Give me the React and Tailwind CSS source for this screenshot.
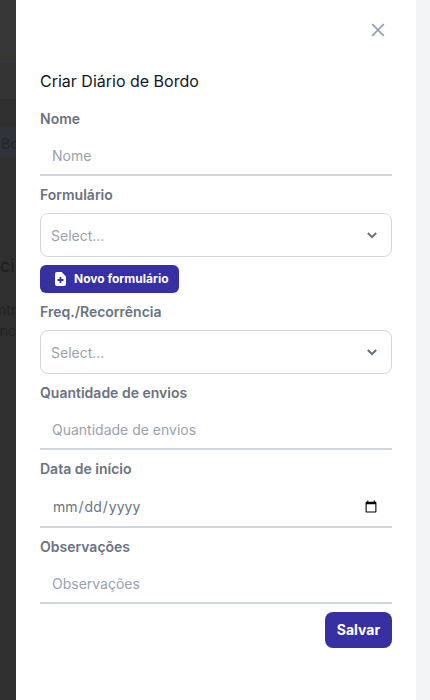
const fontStack = { fontFamily: 'Inter, "Noto Sans", sans-serif' };

function FieldLabel({ children, className = '' }) {
  return <label className={`block text-sm leading-5 font-semibold text-gray-500 ${className}`}>{children}</label>;
}

function LineInput({ placeholder, type = 'text' }) {
  return (
    <input
      type={type}
      placeholder={placeholder}
      className="block h-10 w-full border-0 border-b-2 border-gray-300 bg-white px-3 text-sm text-gray-500 placeholder:text-gray-400 outline-none"
    />
  );
}

function SelectBox() {
  return (
    <div className="flex h-11 w-full items-center justify-between rounded-lg border border-gray-300 bg-white pl-2.5 pr-[12px]">
      <span className="pt-0.5 text-sm text-gray-400">Select...</span>
      <svg width="14" height="14" viewBox="0 0 14 14" fill="none" stroke="#6b7280" strokeWidth="2">
        <path d="M2.8 5 7 9l4.2-4" />
      </svg>
    </div>
  );
}

function BackgroundStrip() {
  return (
    <div className="h-full w-4 shrink-0 overflow-hidden bg-[#303030]">
      <div className="h-16 border-b border-[#2c3242] bg-[#373737]" />
      <div className="h-[36px] border-b border-[#303030] bg-[#343434]" />
      <div className="mt-[27px] flex h-[30px] w-4 items-center bg-[#30333a] pt-1 pl-px text-sm whitespace-nowrap text-[#23262c]">Bo</div>
      <div className="mt-[95px] h-7 w-4 text-lg leading-7 whitespace-nowrap text-[#1f1f1f]">ci</div>
      <div className="mt-[19px] flex w-4 justify-end text-sm leading-[21px] whitespace-nowrap text-[#222222]">ntr</div>
      <div className="flex w-4 justify-end text-sm leading-[21px] whitespace-nowrap text-[#222222]">ênc</div>
    </div>
  );
}

export default function App() {
  return (
    <div className="flex h-[700px] w-[430px] overflow-hidden bg-[#f3f4f6]" style={fontStack}>
      <BackgroundStrip />
      <div className="h-full w-[400px] shrink-0 bg-white px-6 pt-[21px]">
        <div className="flex justify-end pr-[5px]">
          <button type="button" className="text-gray-400">
            <svg width="18" height="18" viewBox="0 0 18 18" fill="none" stroke="currentColor" strokeWidth="1.8">
              <path d="M3.2 3.2 14.8 14.8M14.8 3.2 3.2 14.8" />
            </svg>
          </button>
        </div>
        <h2 className="mt-[30px] text-base leading-6 text-gray-900">Criar Diário de Bordo</h2>
        <form className="mt-[16px]">
          <FieldLabel>Nome</FieldLabel>
          <div className="mt-[7px]">
            <LineInput placeholder="Nome" />
          </div>
          <FieldLabel className="mt-[9px]">Formulário</FieldLabel>
          <div className="mt-2">
            <SelectBox />
          </div>
          <button type="button" className="mt-2 flex h-7 w-[139px] items-center gap-2 rounded-md bg-[#3730a3] pl-[15px] text-xs font-bold text-white">
            <svg width="11" height="14" viewBox="0 0 11 14" fill="white">
              <path d="M2 0h4.6L11 4.4V12a2 2 0 0 1-2 2H2a2 2 0 0 1-2-2V2a2 2 0 0 1 2-2z" />
              <path d="M5.5 5v6M2.5 8h6" stroke="#3730a3" strokeWidth="1.8" />
            </svg>
            Novo formulário
          </button>
          <FieldLabel className="mt-[9px]">Freq./Recorrência</FieldLabel>
          <div className="mt-2">
            <SelectBox />
          </div>
          <FieldLabel className="mt-[9px]">Quantidade de envios</FieldLabel>
          <div className="mt-[7px]">
            <LineInput placeholder="Quantidade de envios" />
          </div>
          <FieldLabel className="mt-[9px]">Data de início</FieldLabel>
          <div className="mt-[9px]">
            <LineInput type="date" />
          </div>
          <FieldLabel className="mt-[9px]">Observações</FieldLabel>
          <div className="mt-[7px]">
            <LineInput placeholder="Observações" />
          </div>
          <div className="mt-2 flex justify-end">
            <button type="button" className="h-9 w-[67px] rounded-lg bg-[#3730a3] text-sm font-bold text-white">
              Salvar
            </button>
          </div>
        </form>
      </div>
    </div>
  );
}
